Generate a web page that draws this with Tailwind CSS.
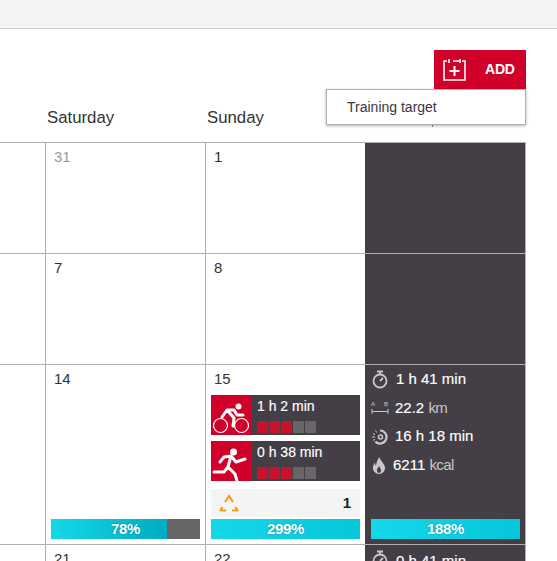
<!DOCTYPE html>
<html><head><meta charset="utf-8"><script src="https://cdn.jsdelivr.net/npm/@tailwindcss/browser@4"></script></head>
<body class="bg-white overflow-hidden font-['Liberation_Sans',Arial,sans-serif] text-[#333]">
<div class="w-[557px] h-[561px] overflow-hidden">
  <div class="h-[29px] bg-[#f3f3f3] border-b border-[#cfcfcf]"></div>
  <div class="relative h-[113px] w-[526px]">
    <div class="absolute right-0 top-[21px] w-[92px] h-[39px] bg-[#d0002a] flex items-center text-white">
      <svg class="ml-[9px]" width="23" height="24" viewBox="0 0 23 24" fill="none" stroke="white" stroke-width="1.6"><path d="M4 3H1v19h21V3h-3M10 3h6M6 1v4M17 1v4"/><path d="M11.500 8v10M6.500 13h10" stroke-width="2"/></svg>
      <span class="ml-[19px] text-[14px] font-bold tracking-[-0.2px]">ADD</span>
    </div>
    <div class="absolute left-[326px] top-[60px] w-[200px] h-[36px] bg-white border border-[#b0b0b0] shadow-[0_1px_3px_rgba(0,0,0,0.3)] flex items-center pl-[20px] text-[14px] z-10 text-[#3a3640]">Training target</div>
    <div class="absolute left-[432px] top-[96px] w-px h-[2px] bg-[#888]"></div>
    <div class="absolute left-[47px] top-[76px] text-[16.800px] text-[#333]">Saturday</div>
    <div class="absolute left-[207px] top-[76px] text-[16.800px] text-[#333]">Sunday</div>
  </div>

  <div class="w-[526px] grid grid-cols-[45px_160px_160px_161px] grid-rows-[111px_111px_180px_40px] border-t border-[#b0b0b0] [&>div]:border-b [&>div]:border-[#b0b0b0]">
    <div></div>
    <div class="border-l border-[#b0b0b0] pl-[8px] pt-[3px] text-[15px] text-[#999]">31</div>
    <div class="border-l border-[#b0b0b0] pl-[8px] pt-[3px] text-[15px]">1</div>
    <div class="bg-[#443f47] border-r"></div>

    <div></div>
    <div class="border-l border-[#b0b0b0] pl-[8px] pt-[3px] text-[15px]">7</div>
    <div class="border-l border-[#b0b0b0] pl-[8px] pt-[3px] text-[15px]">8</div>
    <div class="bg-[#443f47] border-r"></div>

    <div></div>
    <div class="border-l border-[#b0b0b0] px-[5px] pt-[6px] pb-[5px] flex flex-col justify-between">
      <div class="pl-[3px] text-[15px] leading-[16px]">14</div>
      <div class="relative h-[20px] bg-[#666] text-white">
        <div class="h-full w-[78%] bg-gradient-to-r from-[#14d8ea] to-[#00acc0]"></div>
        <div class="absolute inset-0 flex items-center justify-center text-[15px] font-bold [text-shadow:0_0_2px_rgba(0,0,0,0.3)] tracking-[-0.3px]">78%</div>
      </div>
    </div>
    <div class="border-l border-[#b0b0b0] px-[5px] pt-[6px] pb-[5px] flex flex-col">
      <div class="pl-[3px] text-[15px] leading-[16px] mb-[8px]">15</div>
      <div class="flex h-[40px] bg-[#443f47] mb-[6px]">
        <div class="w-[40px] h-full bg-[#d0002a] shrink-0">
          <svg width="40" height="40" viewBox="0 0 40 40" fill="none" stroke="white"><circle cx="9.500" cy="30.500" r="7" stroke-width="1.200"/><circle cx="30.500" cy="30.500" r="7" stroke-width="1.200"/><circle cx="27.500" cy="11.500" r="3" fill="white" stroke="none"/><path d="M11 22l5-7 7 0 3 5h6M16 15l7 8-1 8" stroke-width="3" stroke-linejoin="round" stroke-linecap="round"/></svg>
        </div>
        <div class="pl-[6px] pt-[3px] text-white">
          <div class="text-[14px] leading-[16px] [-webkit-text-stroke:0.15px_white]">1 h 2 min</div>
          <div class="flex gap-px mt-[7px]">
            <i class="block w-[11px] h-[12px] rounded-[1px] bg-[#c8142a]"></i><i class="block w-[11px] h-[12px] rounded-[1px] bg-[#c8142a]"></i><i class="block w-[11px] h-[12px] rounded-[1px] bg-[#c8142a]"></i><i class="block w-[11px] h-[12px] rounded-[1px] bg-[#666]"></i><i class="block w-[11px] h-[12px] rounded-[1px] bg-[#666]"></i>
          </div>
        </div>
      </div>
      <div class="flex h-[40px] bg-[#443f47]">
        <div class="w-[40px] h-full bg-[#d0002a] shrink-0">
          <svg width="40" height="40" viewBox="0 0 40 40" fill="none" stroke="white" stroke-width="3" stroke-linejoin="round" stroke-linecap="round"><circle cx="22.500" cy="11" r="3.500" fill="white" stroke="none"/><path d="M9 21l4-5 7-1 5 6 9-3M20 15l-3 11 7 7 2 7M17 26l-4 5H3"/></svg>
        </div>
        <div class="pl-[6px] pt-[3px] text-white">
          <div class="text-[14px] leading-[16px] [-webkit-text-stroke:0.15px_white]">0 h 38 min</div>
          <div class="flex gap-px mt-[7px]">
            <i class="block w-[11px] h-[12px] rounded-[1px] bg-[#c8142a]"></i><i class="block w-[11px] h-[12px] rounded-[1px] bg-[#c8142a]"></i><i class="block w-[11px] h-[12px] rounded-[1px] bg-[#c8142a]"></i><i class="block w-[11px] h-[12px] rounded-[1px] bg-[#666]"></i><i class="block w-[11px] h-[12px] rounded-[1px] bg-[#666]"></i>
          </div>
        </div>
      </div>
      <div class="mt-[8px] h-[28px] bg-[#f3f5f4] flex items-center justify-between pl-[8px] pr-[9px]">
        <svg width="20" height="18" viewBox="0 0 20 18" fill="none" stroke="#f89a0c" stroke-width="2"><path d="M6 8l4-6 4 6M1 17l2.500-4M1 16.500h6M13 16.500h6M19 17l-2.500-4"/></svg>
        <span class="text-[15px] font-bold text-[#222]">1</span>
      </div>
      <div class="mt-[2px] h-[20px] bg-gradient-to-r from-[#14d8ea] to-[#06c6da] flex items-center justify-center text-white text-[15px] font-bold [text-shadow:0_0_2px_rgba(0,0,0,0.3)] tracking-[-0.3px]">299%</div>
    </div>
    <div class="bg-[#443f47] border-r pl-[6px] pr-[5px] pb-[5px] flex flex-col text-white">
      <div class="flex items-center h-[29px]">
        <svg class="mr-[8px] ml-[1px] shrink-0" width="16" height="19" viewBox="0 0 16 19" fill="none" stroke="#c9c7ca" stroke-width="1.800"><circle cx="8" cy="11" r="6.500"/><path d="M5 1.500h6M8 2v3M8 11l3-3"/></svg>
        <span class="text-[15px] [-webkit-text-stroke:0.15px_white]">1 h 41 min</span>
      </div>
      <div class="flex items-center h-[28px]">
        <svg class="mr-[6px] shrink-0" width="18" height="14" viewBox="0 0 18 14" fill="none" stroke="#c9c7ca" stroke-width="1"><path d="M1 8v5M17 8v5M1 10.500h16"/><text x="0" y="5" font-size="6" font-family="Liberation Sans" fill="#c9c7ca" stroke="none">A</text><text x="13" y="5" font-size="6" font-family="Liberation Sans" fill="#c9c7ca" stroke="none">B</text></svg>
        <span class="text-[15px] [-webkit-text-stroke:0.15px_white]">22.2 <span class="text-[#c9c7ca] tracking-[-0.6px] [-webkit-text-stroke:0]">km</span></span>
      </div>
      <div class="flex items-center h-[29px]">
        <svg class="mr-[7px] shrink-0" width="17" height="16" viewBox="0 0 17 16" fill="none" stroke="#c9c7ca"><path d="M9 1.500a6.500 6.500 0 1 1-4.600 11.100" stroke-width="2.200"/><circle cx="9.500" cy="8" r="2" stroke-width="1.500"/><path d="M1 8h3M2 4.500l2 1.200M4.500 1.500l1.200 2M2 11.500l2-1.200" stroke-width="1"/></svg>
        <span class="text-[15px] [-webkit-text-stroke:0.15px_white]">16 h 18 min</span>
      </div>
      <div class="flex items-center h-[28px]">
        <svg class="mr-[7px] ml-[1px] shrink-0" width="14" height="17" viewBox="0 0 14 17"><path fill="#c9c7ca" d="M7 0c1 3 5 6 6 10 .5 4-2.500 7-6 7s-6.500-3-6-7c.3-2 1-3 2-4.500 0 1.500.3 2.500 1 3C4.500 5 6 3 7 0zM7 9c-1 2-2.500 3-2 5 .3 1.300 1.200 2 2 2s1.800-.7 2-2c.3-2-1-3-2-5z"/></svg>
        <span class="text-[15px] [-webkit-text-stroke:0.15px_white]">6211 <span class="text-[#c9c7ca] tracking-[-0.6px] [-webkit-text-stroke:0]">kcal</span></span>
      </div>
      <div class="mt-auto h-[20px] bg-gradient-to-r from-[#14d8ea] to-[#06c6da] flex items-center justify-center text-[15px] font-bold [text-shadow:0_0_2px_rgba(0,0,0,0.3)] tracking-[-0.3px]">188%</div>
    </div>

    <div></div>
    <div class="border-l border-[#b0b0b0] pl-[8px] pt-[3px] text-[15px]">21</div>
    <div class="border-l border-[#b0b0b0] pl-[8px] pt-[3px] text-[15px]">22</div>
    <div class="bg-[#443f47] border-r flex items-start text-white pl-[7px] pt-[5px]">
      <svg class="mr-[8px] shrink-0" width="16" height="19" viewBox="0 0 16 19" fill="none" stroke="#c9c7ca" stroke-width="1.800"><circle cx="8" cy="11" r="6.500"/><path d="M5 1.500h6M8 2v3M8 11l3-3"/></svg>
      <span class="text-[15px] [-webkit-text-stroke:0.15px_white]">0 h 41 min</span>
    </div>
  </div>
</div>
</body></html>
